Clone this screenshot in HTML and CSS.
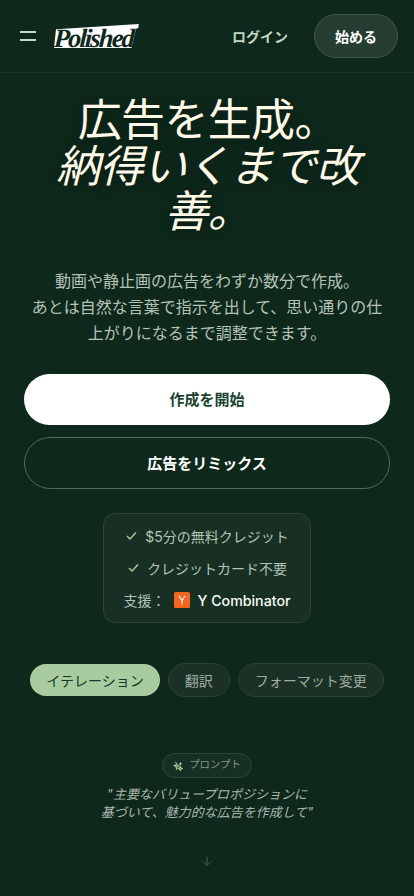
FILE: index.html
```html
<!DOCTYPE html>
<html lang="ja">
<head>
<meta charset="utf-8">
<meta name="viewport" content="width=device-width, initial-scale=1">
<title>Polished</title>
<link rel="stylesheet" href="styles.css">
</head>
<body>
<header class="header">
  <button class="menu" aria-label="メニュー"><span></span><span></span></button>
  <svg class="logo" width="86" height="26" viewBox="0 0 86 26" role="img" aria-label="Polished">
    <path d="M2 6.3 84.8 1 84.3 5 82 5.8 77.5 25H0z" fill="#fff"/>
    <text class="logo-text" transform="translate(-.5 24.4) skewX(-3)" x="0" y="0" textLength="81" lengthAdjust="spacing">Polished</text>
  </svg>
  <a class="login">ログイン</a>
  <a class="start">始める</a>
</header>
<main class="main">
  <h1 class="title">広告を生成。<br><em>納得いくまで改善。</em></h1>
  <p class="lead">動画や静止画の広告をわずか数分で作成。<br>あとは自然な言葉で指示を出して、思い通りの仕上がりになるまで調整できます。</p>
  <div class="actions">
    <a class="btn primary">作成を開始</a>
    <a class="btn outline">広告をリミックス</a>
  </div>
  <div class="facts">
    <div class="fact"><svg class="check" width="12" height="12" viewBox="0 0 12 12"><path d="M2 6 5 9 11 2.5"/></svg><span>$5分の無料クレジット</span></div>
    <div class="fact"><svg class="check" width="12" height="12" viewBox="0 0 12 12"><path d="M2 6 5 9 11 2.5"/></svg><span>クレジットカード不要</span></div>
    <div class="fact"><span>支援：</span><svg class="yc" width="16" height="16" viewBox="0 0 16 16"><rect width="16" height="16" rx="1.5" fill="#f4651f"/><path d="M5 3.8 8 8.8 11 3.8M8 8.8V12.5" fill="none" stroke="#fff" stroke-width="1.1"/></svg><strong class="yc-name">Y Combinator</strong></div>
  </div>
  <nav class="tabs">
    <a class="tab active">イテレーション</a>
    <a class="tab">翻訳</a>
    <a class="tab">フォーマット変更</a>
  </nav>
  <section class="prompt">
    <div class="badge"><svg width="10" height="10" viewBox="0 0 10 10" fill="none" stroke="#a9cda0" stroke-width="1.1"><path d="M3.5 2.5 4.2 4 5.7 4.7 4.2 5.4 3.5 7 2.8 5.4 1.2 4.7 2.8 4zM7.3 5.5 7.8 6.8 9.4 7.5 7.8 8.1 7.3 9.6 6.7 8.1 5.2 7.5 6.7 6.8zM6 2.7h2.8M7.4 1.3v2.8M1.8 1.3h1M2.8 8.3h1.2"/></svg><span>プロンプト</span></div>
    <p class="quote">"主要なバリュープロポジションに<br>基づいて、魅力的な広告を作成して"</p>
    <svg class="arrow" width="10" height="10" viewBox="0 0 10 10"><path d="M5 .5V9.3M1 5.5l4 4 4-4"/></svg>
  </section>
</main>
</body>
</html>
```
FILE: styles.css
```css
* { box-sizing: border-box; }
body {
  margin: 0;
  height: 896px;
  overflow: hidden;
  background: #0e281b;
  color: #b5c2b8;
  font-family: Inter, "Noto Sans CJK JP", sans-serif;
}
.header {
  display: flex;
  align-items: center;
  height: 73px;
  padding: 0 16px 1px 20px;
  border-bottom: 1px solid #1b3527;
}
.menu {
  display: flex;
  flex-direction: column;
  gap: 6px;
  width: 16px;
  padding: 0;
  border: 0;
  background: none;
}
.menu span { height: 2px; background: #c4dac5; }
.logo { margin-left: 18px; }
.logo-text {
  font: italic 700 26.5px "Liberation Serif", serif;
  fill: #0e281b;
}
.login {
  margin-left: auto;
  font-size: 14px;
  font-weight: 700;
  color: #c3d7c5;
}
.start {
  display: flex;
  align-items: center;
  justify-content: center;
  width: 84px;
  height: 44px;
  margin-left: 26px;
  border: 1px solid #41584a;
  border-radius: 22px;
  background: #263d31;
  color: #fff;
  font-size: 14px;
  font-weight: 700;
}
.main {
  display: flex;
  flex-direction: column;
  align-items: center;
  padding: 25px 24px 0;
}
.title {
  margin: 0;
  padding-left: 1.5px;
  font-size: 44px;
  font-weight: 400;
  line-height: 45.7px;
  letter-spacing: -.66px;
  text-align: center;
  color: #fff9e8;
  text-shadow: 0 2px 16px rgba(0, 0, 0, .4);
}
.lead {
  margin: 33px 0 0;
  font-size: 16px;
  line-height: 26px;
  text-align: center;
}
.actions {
  display: flex;
  flex-direction: column;
  gap: 12px;
  width: 100%;
  margin-top: 28px;
}
.btn {
  display: flex;
  align-items: center;
  justify-content: center;
  padding-bottom: 2px;
  border-radius: 26px;
  font-size: 15px;
  font-weight: 700;
}
.primary { height: 51px; background: #fff; color: #1b4332; }
.outline { height: 52px; border: 1px solid #52685a; color: #fff; }
.facts {
  display: flex;
  flex-direction: column;
  align-items: center;
  gap: 8px;
  width: 208px;
  height: 110px;
  margin-top: 24px;
  padding-top: 10px;
  border: 1px solid #2a4336;
  border-radius: 12px;
  background: #183024;
  font-size: 14px;
}
.fact { display: flex; align-items: center; gap: 8px; height: 24px; }
.check { fill: none; stroke: #a9cda0; stroke-width: 1.4; }
.yc-name { color: #f8fbf5; font-size: 14.2px; font-weight: 500; }
.tabs { display: flex; align-items: center; gap: 8px; margin-top: 40px; }
.tab {
  display: flex;
  align-items: center;
  height: 34px;
  padding: 0 16px;
  border: 1px solid #2a4135;
  border-radius: 17px;
  background: #1b3126;
  color: #a0aca4;
  font-size: 14px;
  white-space: nowrap;
}
.active { height: 32px; border: 0; background: #a8cb9f; color: #16382a; }
.prompt { display: flex; flex-direction: column; align-items: center; }
.badge {
  display: flex;
  align-items: center;
  justify-content: center;
  gap: 6px;
  width: 90px;
  height: 25px;
  margin-top: 56px;
  padding-bottom: 4px;
  border: 1px solid #2c4638;
  border-radius: 13px;
  background: #163023;
  color: #83958a;
  font-size: 10.4px;
}
.badge svg { position: relative; top: 2px; }
.quote {
  margin: 7px 0 0;
  font-size: 13px;
  font-style: italic;
  line-height: 18px;
  text-align: center;
  color: #a9b7ad;
}
.arrow { margin-top: 35px; fill: none; stroke: #486052; stroke-width: 1; }
```
